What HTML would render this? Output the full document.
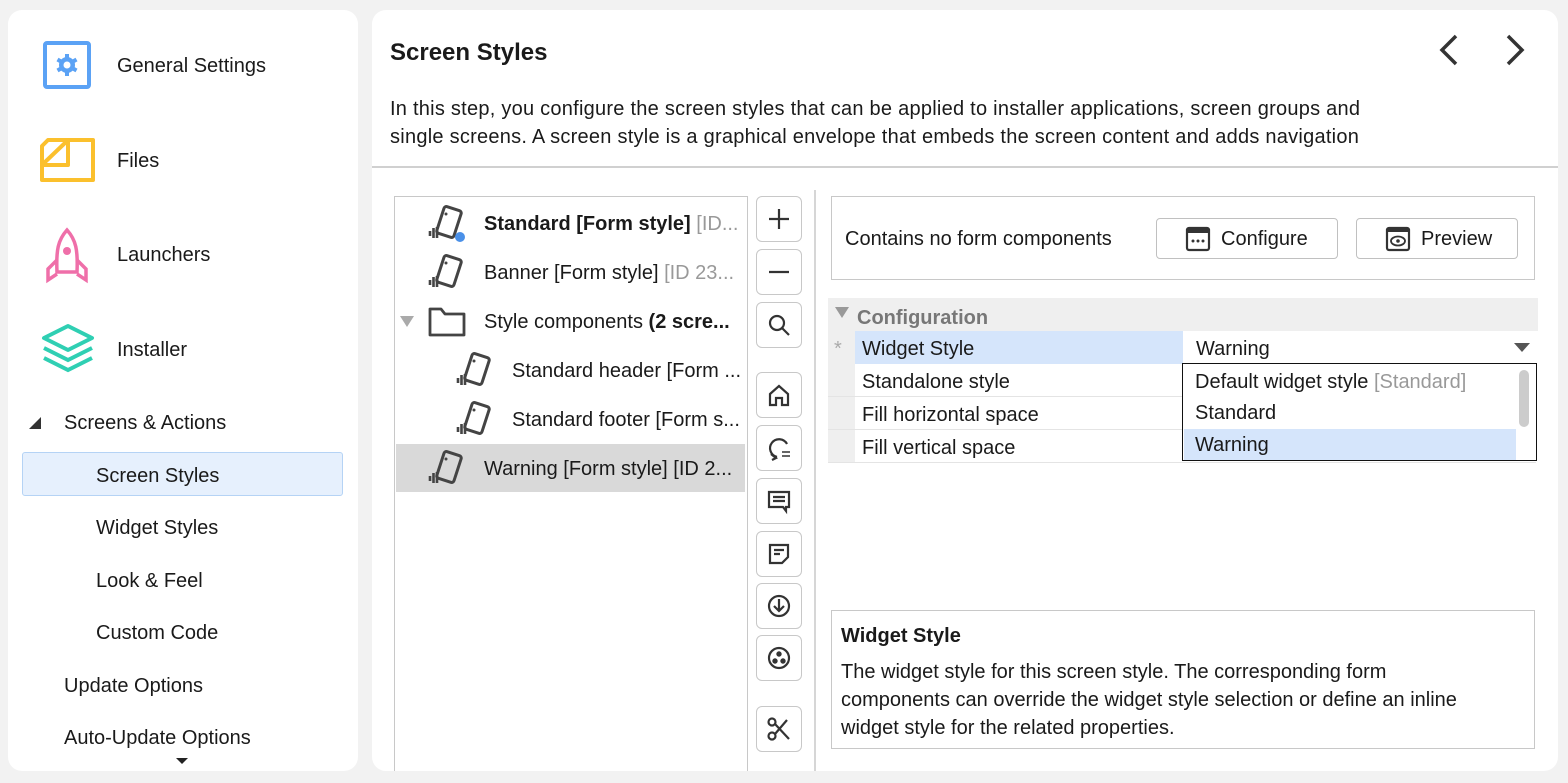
<!DOCTYPE html>
<html><head><style>
*{box-sizing:border-box;margin:0;padding:0}
body{width:1568px;height:783px;background:#f2f2f2;font-family:"Liberation Sans",sans-serif;font-size:20px;color:#1a1a1a;position:relative;overflow:hidden}
.a{position:absolute}
.card{background:#fff;border-radius:14px}
.t{position:absolute;white-space:nowrap}
.c{overflow:hidden}
.btn{position:absolute;left:756px;width:46px;height:46px;border:1.5px solid #c8c8c8;border-radius:6px;background:#fff;display:flex;align-items:center;justify-content:center}
.btn svg{width:28px;height:28px;fill:none;stroke:#333;stroke-width:2.2}
.g{color:#999}
.row{position:absolute;left:828px;width:708px;height:33px;border-bottom:1px solid #e4e4e4}
</style></head><body>
<div class="a card" style="left:8px;top:10px;width:350px;height:761px"></div>
<div class="a card" style="left:372px;top:10px;width:1186px;height:761px"></div>

<svg class="a" style="left:40px;top:40px" width="54" height="52" viewBox="0 0 54 52"><rect x="5" y="3" width="44" height="44" rx="2" fill="none" stroke="#5ba2f5" stroke-width="4"/><circle cx="27" cy="25" r="8" fill="#5ba2f5"/><g stroke="#5ba2f5" stroke-width="4"><line x1="27" y1="14" x2="27" y2="36"/><line x1="17.5" y1="19.5" x2="36.5" y2="30.5"/><line x1="17.5" y1="30.5" x2="36.5" y2="19.5"/></g><circle cx="27" cy="25" r="3.5" fill="#fff"/></svg>
<div class="t" style="left:117px;top:55px">General Settings</div>
<svg class="a" style="left:38px;top:136px" width="58" height="48" viewBox="0 0 58 48"><g fill="none" stroke="#fbc02d" stroke-width="4" stroke-linejoin="round"><path d="M22 4H55V44H4V29"/><path d="M4 29H30V4H10L4 10Z"/><path d="M6 27L28 6"/></g></svg>
<div class="t" style="left:117px;top:150px">Files</div>
<svg class="a" style="left:44px;top:226px" width="48" height="58" viewBox="0 0 48 58"><path d="M23 4C14 14 12 24 13 46H33C34 24 32 14 23 4Z" fill="none" stroke="#ef6fa9" stroke-width="3.5"/><circle cx="23" cy="25" r="4" fill="#ef6fa9"/><path d="M13 34L4 43V54L13 48M33 34L42 43V54L33 48" fill="none" stroke="#ef6fa9" stroke-width="3.5"/></svg>
<div class="t" style="left:117px;top:244px">Launchers</div>
<svg class="a" style="left:38px;top:322px" width="60" height="54" viewBox="0 0 60 54"><path d="M30 4L54 16L30 28L6 16Z" fill="none" stroke="#2fcfb3" stroke-width="4" stroke-linejoin="round"/><path d="M6 26L30 38L54 26M6 36L30 48L54 36" fill="none" stroke="#2fcfb3" stroke-width="4"/></svg>
<div class="t" style="left:117px;top:339px">Installer</div>
<svg class="a" style="left:28px;top:416px" width="14" height="14"><path d="M13 1V13H1Z" fill="#333"/></svg>
<div class="t" style="left:64px;top:412px">Screens &amp; Actions</div>
<div class="a" style="left:22px;top:452px;width:321px;height:44px;background:#e6f0fd;border:1.5px solid #b5d3f5;border-radius:3px"></div>
<div class="t" style="left:96px;top:465px">Screen Styles</div>
<div class="t" style="left:96px;top:517px">Widget Styles</div>
<div class="t" style="left:96px;top:570px">Look &amp; Feel</div>
<div class="t" style="left:96px;top:622px">Custom Code</div>
<div class="t" style="left:64px;top:675px">Update Options</div>
<div class="t" style="left:64px;top:727px">Auto-Update Options</div>
<svg class="a" style="left:176px;top:758px" width="12" height="8"><path d="M0 0H12L6 6Z" fill="#222"/></svg>

<div class="t" style="left:390px;top:39px;font-size:24px;font-weight:bold">Screen Styles</div>
<svg class="a" style="left:1432px;top:32px" width="100" height="38" viewBox="0 0 100 38"><path d="M24 4L10 18L24 32M76 4L90 18L76 32" fill="none" stroke="#333" stroke-width="3.5"/></svg>
<div class="t" style="left:390px;top:95px;line-height:28px;letter-spacing:0.25px">In this step, you configure the screen styles that can be applied to installer applications, screen groups and<br>single screens. A screen style is a graphical envelope that embeds the screen content and adds navigation</div>
<div class="a" style="left:372px;top:166px;width:1186px;height:1.5px;background:#d0d0d0"></div>

<div class="a" style="left:394px;top:196px;width:354px;height:575px;border:1.5px solid #c8c8c8;border-bottom:none"></div>
<div class="a" style="left:396px;top:444px;width:349px;height:48px;background:#d9d9d9"></div>
<svg width="0" height="0" style="position:absolute"><defs><g id="fi"><rect x="14" y="5" width="18" height="28" rx="2.5" transform="rotate(18 23 19)" fill="none" stroke="#444" stroke-width="3"/><circle cx="20" cy="11" r="1.5" fill="#444"/><path d="M4 28v5M7.5 25v10M11 24v11" stroke="#444" stroke-width="2.6"/></g></defs></svg>
<svg class="a" style="left:426px;top:203px" width="42" height="42"><use href="#fi"/><circle cx="34" cy="34" r="5" fill="#4a90e8"/></svg>
<div class="t c" style="left:484px;top:213px;width:262px;font-weight:bold">Standard [Form style] <span class="g" style="font-weight:normal">[ID...</span></div>
<svg class="a" style="left:426px;top:252px" width="42" height="42"><use href="#fi"/></svg>
<div class="t c" style="left:484px;top:262px;width:262px">Banner [Form style] <span class="g">[ID 23...</span></div>
<svg class="a" style="left:400px;top:316px" width="14" height="12"><path d="M0 0H14L7 11Z" fill="#aaa"/></svg>
<svg class="a" style="left:427px;top:305px" width="40" height="32"><path d="M3 4H14L18 9H37V30H3Z" fill="none" stroke="#444" stroke-width="2.8" stroke-linejoin="round"/></svg>
<div class="t c" style="left:484px;top:311px;width:262px">Style components <b>(2 scre...</b></div>
<svg class="a" style="left:454px;top:350px" width="42" height="42"><use href="#fi"/></svg>
<div class="t c" style="left:512px;top:360px;width:234px">Standard header [Form ...</div>
<svg class="a" style="left:454px;top:399px" width="42" height="42"><use href="#fi"/></svg>
<div class="t c" style="left:512px;top:409px;width:234px">Standard footer [Form s...</div>
<svg class="a" style="left:426px;top:448px" width="42" height="42"><use href="#fi"/></svg>
<div class="t c" style="left:484px;top:458px;width:262px">Warning [Form style] [ID 2...</div>

<div class="btn" style="top:196px"><svg viewBox="0 0 28 28"><path d="M14 4V24M4 14H24"/></svg></div>
<div class="btn" style="top:249px"><svg viewBox="0 0 28 28"><path d="M4 14H24"/></svg></div>
<div class="btn" style="top:302px"><svg viewBox="0 0 28 28"><circle cx="12" cy="12" r="7"/><path d="M17 17L24 24"/></svg></div>
<div class="btn" style="top:372px"><svg viewBox="0 0 28 28"><path d="M5 13L14 5L23 13V24H17V17H11V24H5Z"/></svg></div>
<div class="btn" style="top:425px"><svg viewBox="0 0 28 28"><path d="M22 10A9 9 0 1 0 12 23M6 20L11 24L7 26"/><path d="M17 18H25M17 22H25" stroke-width="1.6"/></svg></div>
<div class="btn" style="top:478px"><svg viewBox="0 0 28 28"><path d="M4 5H24V20H21V24L18 20H4Z M8 10H20M8 14H20"/></svg></div>
<div class="btn" style="top:531px"><svg viewBox="0 0 28 28"><path d="M5 5H23V17L17 23H5Z M9 10H19M9 14H15"/></svg></div>
<div class="btn" style="top:583px"><svg viewBox="0 0 28 28"><circle cx="14" cy="14" r="10"/><path d="M14 7V19M9 14L14 19L19 14"/></svg></div>
<div class="btn" style="top:635px"><svg viewBox="0 0 28 28"><circle cx="14" cy="14" r="10"/><circle cx="14" cy="10" r="1.6" fill="#333"/><circle cx="10" cy="17" r="1.6" fill="#333"/><circle cx="18" cy="17" r="1.6" fill="#333"/></svg></div>
<div class="btn" style="top:706px"><svg viewBox="0 0 28 28"><circle cx="7" cy="7" r="3.5"/><circle cx="7" cy="21" r="3.5"/><path d="M10 9L24 24M10 19L22 5"/></svg></div>
<div class="a" style="left:814px;top:190px;width:1.5px;height:581px;background:#d6d6d6"></div>

<div class="a" style="left:831px;top:196px;width:704px;height:84px;border:1.5px solid #c8c8c8"></div>
<div class="t" style="left:845px;top:228px">Contains no form components</div>
<div class="a" style="left:1156px;top:218px;width:182px;height:41px;border:1.5px solid #c0c0c0;border-radius:4px"></div>
<svg class="a" style="left:1185px;top:226px" width="26" height="26"><rect x="2" y="2" width="22" height="22" rx="2" fill="none" stroke="#333" stroke-width="2.2"/><rect x="2" y="2" width="22" height="5" fill="#333"/><circle cx="8" cy="15" r="1.5" fill="#333"/><circle cx="13" cy="15" r="1.5" fill="#333"/><circle cx="18" cy="15" r="1.5" fill="#333"/></svg>
<div class="t" style="left:1221px;top:228px">Configure</div>
<div class="a" style="left:1356px;top:218px;width:162px;height:41px;border:1.5px solid #c0c0c0;border-radius:4px"></div>
<svg class="a" style="left:1385px;top:226px" width="26" height="26"><rect x="2" y="2" width="22" height="22" rx="2" fill="none" stroke="#333" stroke-width="2.2"/><rect x="2" y="2" width="22" height="4" fill="#333"/><ellipse cx="13" cy="15" rx="7" ry="4.5" fill="none" stroke="#333" stroke-width="1.8"/><circle cx="13" cy="15" r="1.8" fill="#333"/></svg>
<div class="t" style="left:1421px;top:228px">Preview</div>

<div class="a" style="left:828px;top:298px;width:710px;height:33px;background:#efefef"></div>
<svg class="a" style="left:835px;top:307px" width="14" height="12"><path d="M0 0H14L7 11Z" fill="#999"/></svg>
<div class="t" style="left:857px;top:307px;font-weight:bold;color:#777">Configuration</div>
<div class="row" style="top:331px"></div>
<div class="a" style="left:828px;top:331px;width:27px;height:132px;background:#efefef"></div>
<div class="a" style="left:855px;top:331px;width:328px;height:33px;background:#d5e5fb"></div>
<div class="t" style="left:834px;top:338px;color:#aaa">*</div>
<div class="t" style="left:862px;top:338px">Widget Style</div>
<div class="t" style="left:1196px;top:338px">Warning</div>
<svg class="a" style="left:1514px;top:343px" width="16" height="10"><path d="M0 0H16L8 9Z" fill="#555"/></svg>
<div class="row" style="top:364px"></div><div class="row" style="top:397px"></div><div class="row" style="top:430px"></div>
<div class="t" style="left:862px;top:371px">Standalone style</div>
<div class="t" style="left:862px;top:404px">Fill horizontal space</div>
<div class="t" style="left:862px;top:437px">Fill vertical space</div>
<div class="a" style="left:1182px;top:363px;width:355px;height:98px;border:1.5px solid #111;background:#fff"></div>
<div class="a" style="left:1184px;top:429px;width:332px;height:31px;background:#d5e5fb"></div>
<div class="a" style="left:1519px;top:370px;width:10px;height:57px;background:#ccc;border-radius:5px"></div>
<div class="t" style="left:1195px;top:371px">Default widget style <span class="g">[Standard]</span></div>
<div class="t" style="left:1195px;top:402px">Standard</div>
<div class="t" style="left:1195px;top:434px">Warning</div>

<div class="a" style="left:831px;top:610px;width:704px;height:139px;border:1.5px solid #c8c8c8"></div>
<div class="t" style="left:841px;top:625px;font-weight:bold">Widget Style</div>
<div class="t" style="left:841px;top:658px;line-height:28px">The widget style for this screen style. The corresponding form<br>components can override the widget style selection or define an inline<br>widget style for the related properties.</div>
</body></html>
